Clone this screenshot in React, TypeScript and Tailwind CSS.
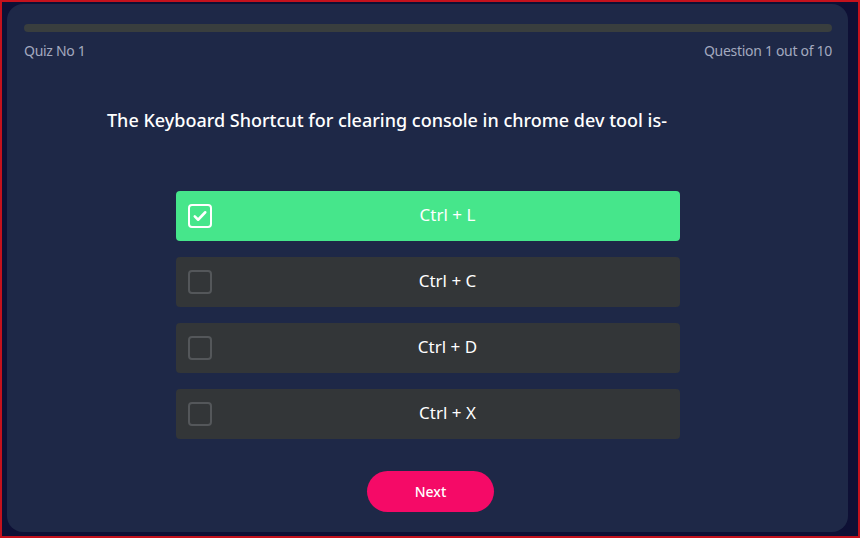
const options = ["Ctrl + L", "Ctrl + C", "Ctrl + D", "Ctrl + X"];

const CheckBox = ({ checked }: { checked: boolean }) =>
  checked ? (
    <span className="flex h-6 w-6 items-center justify-center rounded-[4px] border-2 border-white">
      <svg viewBox="0 0 24 24" className="h-[18px] w-[18px]" fill="none" stroke="white" strokeWidth="3.4" strokeLinecap="round" strokeLinejoin="round">
        <path d="M5 12.5l4.5 4.5L19 7" />
      </svg>
    </span>
  ) : (
    <span className="h-6 w-6 rounded-[4px] border-2 border-[#54575a]" />
  );

const App = () => {
  const selected = 0;
  return (
    <div
      className="h-[538px] w-[860px] border-2 border-[#c4121d] bg-[#0e1035] pl-[5px] pr-[10px] pt-[2px] pb-[4px]"
      style={{ fontFamily: "'Noto Sans', 'Open Sans', sans-serif" }}
    >
      <div className="flex h-full flex-col rounded-[16px] bg-[#1e2847] px-4 pt-5">
        <div className="ml-[1px] h-2 rounded-full bg-[#393e3e]" />
        <div className="mt-2 ml-[1px] flex justify-between text-[14px] tracking-[-0.3px] text-[#a3a9bf]">
          <span>Quiz No 1</span>
          <span>Question 1 out of 10</span>
        </div>
        <h1 className="mt-[46px] pl-[84px] text-[18px] font-medium text-white">
          The Keyboard Shortcut for clearing console in chrome dev tool is-
        </h1>
        <div className="mt-[57px] flex flex-col items-center gap-4">
          {options.map((o, i) => (
            <div
              key={o}
              className={`flex h-[50px] w-[504px] items-center rounded-[4px] px-3 ${
                i === selected ? "bg-[#46e68b]" : "bg-[#333638]"
              }`}
            >
              <CheckBox checked={i === selected} />
              <span className="-mt-[2px] flex-1 pl-4 text-center text-[17px] text-white">{o}</span>
            </div>
          ))}
        </div>
        <div className="mt-8 flex justify-center pl-[6px]">
          <button className="h-[41px] w-[127px] rounded-full bg-[#f50a67] text-[14px] font-medium text-white">
            Next
          </button>
        </div>
      </div>
    </div>
  );
};

export default App;
